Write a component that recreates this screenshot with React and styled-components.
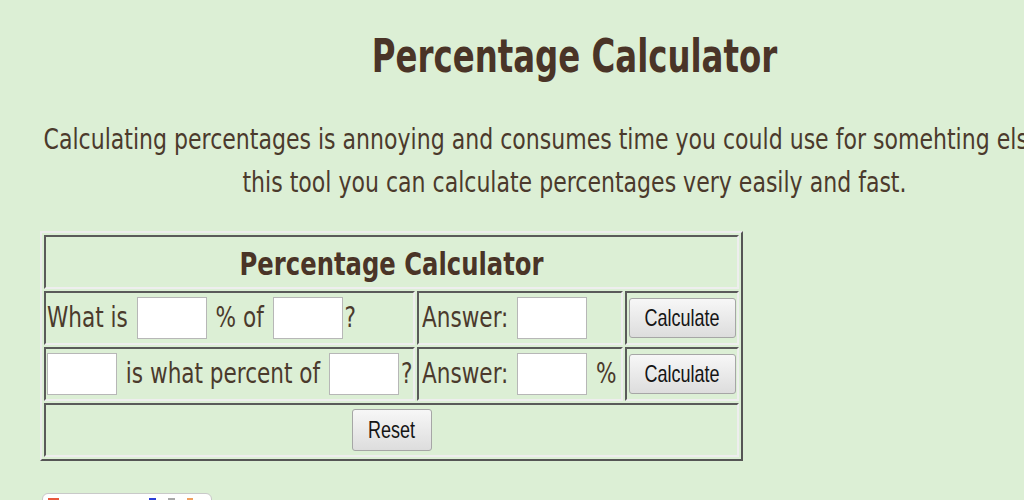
import React from "react";
import styled, { createGlobalStyle } from "styled-components";

const Global = createGlobalStyle`
  html, body {
    margin: 0;
    padding: 0;
    background: #dcefd5;
    overflow: hidden;
  }
  body {
    font-family: "DejaVu Sans Condensed", "DejaVu Sans", sans-serif;
    color: #4b3a2c;
  }
`;

const Page = styled.div`
  width: 1024px;
  height: 500px;
  overflow: hidden;
`;

const Content = styled.div`
  margin-left: 42px;
  width: 1065px;
  padding-top: 33px;
  text-align: center;
`;

const Title = styled.h1`
  margin: 0;
  font-size: 36px;
  line-height: 48px;
  font-weight: bold;
  color: #4a3427;
  transform: scaleY(1.27);
`;

const Intro = styled.p`
  margin: 43.5px 0 0;
  font-size: 24.5px;
  line-height: 36.5px;
  white-space: nowrap;
  transform: scaleY(1.15);
`;

const Calc = styled.table`
  margin: 33.5px 0 0 -2px;
  width: 699px;
  border-collapse: separate;
  border-spacing: 2px;
  border: 2px solid;
  border-color: #ececec #555 #555 #ececec;
  text-align: left;
  font-size: 24px;
  table-layout: fixed;
`;

const Cell = styled.td`
  height: 50px;
  padding: 0 ${(p) => p.$pad || 1}px;
  border: 2px solid;
  border-color: #5a5a5a #eeeeee #eeeeee #5a5a5a;
  vertical-align: middle;
  white-space: nowrap;
  text-align: ${(p) => p.$align || "left"};
`;

const HeadCell = styled(Cell)`
  text-align: center;
  font-weight: bold;
  font-size: 27px;
  color: #4a3427;
`;

const Txt = styled.span`
  display: inline-block;
  vertical-align: middle;
  transform: scaleY(${(p) => p.$k || 1.15});
`;

const Field = styled.input`
  box-sizing: border-box;
  width: 70px;
  height: 42px;
  margin: 0 2px 0 ${(p) => (p.$first ? 0 : 2)}px;
  padding: 0 4px;
  border: 1px solid #b7b7b7;
  background: #fff;
  vertical-align: middle;
  font-size: 18px;
`;

const Button = styled.button`
  box-sizing: border-box;
  width: ${(p) => p.$w || 107}px;
  height: ${(p) => p.$h || 40}px;
  padding: 0;
  border: 1px solid #a6a6a6;
  border-radius: 3px;
  background: linear-gradient(#f7f7f7, #dddddd);
  color: #151515;
  font-family: "Liberation Sans", Arial, sans-serif;
  font-size: 18px;
  vertical-align: middle;
`;

const ButtonLabel = styled.span`
  display: inline-block;
  transform: scaleY(1.3);
`;

const Share = styled.div`
  margin-top: 32px;
  box-sizing: border-box;
  width: 170px;
  height: 24px;
  border: 1px solid #c9c9c9;
  border-radius: 6px;
  background: #fff;
  display: flex;
  align-items: flex-start;
  padding: 4px 0 0 5px;
`;

const Chip = styled.span`
  display: block;
  width: ${(p) => p.$w}px;
  height: 10px;
  margin-left: ${(p) => p.$ml}px;
  background: ${(p) => p.$c};
`;

export default function App() {
  return (
    <Page>
      <Global />
      <Content>
        <Title>Percentage Calculator</Title>
        <Intro>
          Calculating percentages is annoying and consumes time you could use for somehting else. With
          <br />
          this tool you can calculate percentages very easily and fast.
        </Intro>
        <Calc>
          <colgroup>
            <col style={{ width: 371 }} />
            <col style={{ width: 206 }} />
            <col style={{ width: 114 }} />
          </colgroup>
          <tbody>
            <tr>
              <HeadCell colSpan={3}>
                <Txt $k={1.2}>Percentage Calculator</Txt>
              </HeadCell>
            </tr>
            <tr>
              <Cell>
                <Txt>What is</Txt> <Field /> <Txt>% of</Txt> <Field />
                <Txt>?</Txt>
              </Cell>
              <Cell $pad={3}>
                <Txt>Answer:</Txt> <Field />
              </Cell>
              <Cell $align="center">
                <Button>
                  <ButtonLabel>Calculate</ButtonLabel>
                </Button>
              </Cell>
            </tr>
            <tr>
              <Cell>
                <Field $first /> <Txt>is what percent of</Txt> <Field />
                <Txt>?</Txt>
              </Cell>
              <Cell $pad={3}>
                <Txt>Answer:</Txt> <Field /> <Txt>%</Txt>
              </Cell>
              <Cell $align="center">
                <Button>
                  <ButtonLabel>Calculate</ButtonLabel>
                </Button>
              </Cell>
            </tr>
            <tr>
              <Cell colSpan={3} $align="center">
                <Button $w={80} $h={42}>
                  <ButtonLabel>Reset</ButtonLabel>
                </Button>
              </Cell>
            </tr>
          </tbody>
        </Calc>
        <Share>
          <Chip $w={11} $ml={0} $c="#e8583c" />
          <Chip $w={7} $ml={90} $c="#2b3fd8" />
          <Chip $w={7} $ml={12} $c="#a8a8a8" />
          <Chip $w={6} $ml={12} $c="#f0a060" />
        </Share>
      </Content>
    </Page>
  );
}
